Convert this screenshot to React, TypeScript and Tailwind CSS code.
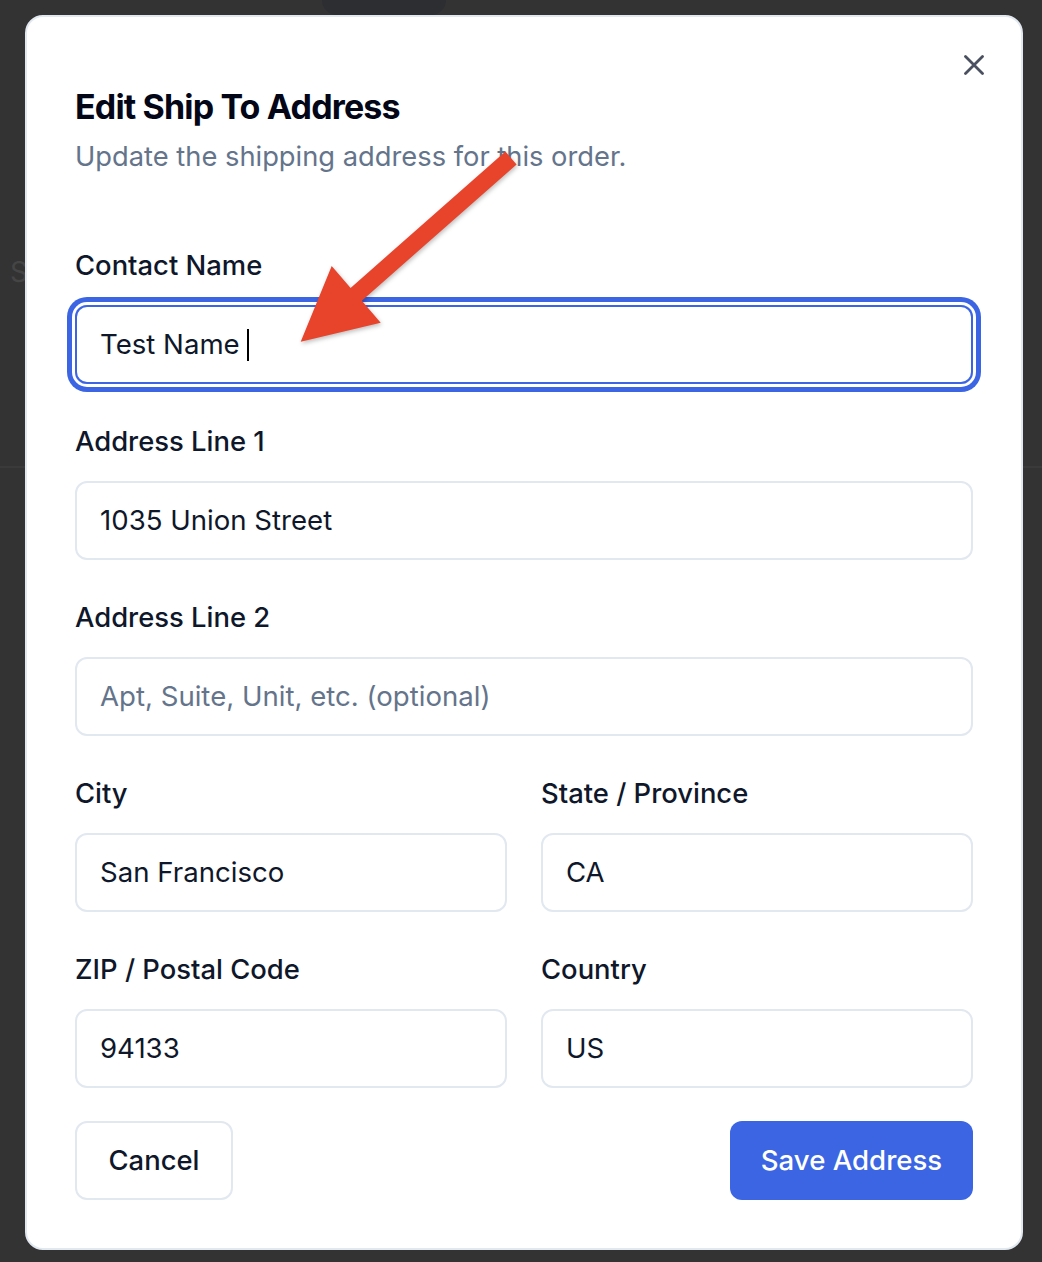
import React from "react";

const font = { fontFamily: "Inter, 'Noto Sans', sans-serif" };

function Field({ label, value, placeholder }: { label: string; value?: string; placeholder?: string }) {
  return (
    <div className="flex flex-col">
      <label className="text-[27.4px] leading-[40px] font-medium text-[#0f172a] mb-[20px] pt-[1px]">{label}</label>
      <div className="h-[79px] rounded-[12px] border-2 border-[#e2e8f0] px-[23px] flex items-center text-[27.6px]">
        {value ? (
          <span className="text-[#0f172a]">{value}</span>
        ) : (
          <span className="text-[#64748b]">{placeholder}</span>
        )}
      </div>
    </div>
  );
}

export default function App() {
  return (
    <div className="relative w-[1042px] h-[1262px] bg-[#333333] overflow-hidden" style={font}>
      {/* page behind the dialog */}
      <div className="flex flex-col">
        <div className="h-[15px] flex">
          <div className="ml-[322px] w-[124px] h-[30px] -mt-[15px] rounded-full bg-[#2d2e32]" />
        </div>
        <div className="pl-[10px] pt-[237px] text-[28px] leading-[40px] text-[#454545]">S</div>
        <div className="mt-[174px] h-[2px] bg-[#3a3a3a]" />
      </div>

      {/* dialog */}
      <div className="absolute left-[25px] top-[15px] w-[998px] bg-white border-2 border-[#e2e8f0] rounded-[18px] px-[48px] pt-[70px] pb-[48px]">
        <button className="absolute top-[38px] right-[37px] w-[20px] h-[20px] text-[#4b5060]">
          <svg width="20" height="20" viewBox="0 0 20 20" fill="none" stroke="currentColor" strokeWidth="2.8" strokeLinecap="round">
            <path d="M1.5 1.5 18.5 18.5M18.5 1.5 1.5 18.5" />
          </svg>
        </button>

        <h2 className="text-[34px] leading-[40px] font-bold tracking-[-0.025em] text-[#020617]">Edit Ship To Address</h2>
        <p className="mt-[10px] text-[27.3px] leading-[40px] text-[#64748b]">Update the shipping address for this order.</p>

        <div className="mt-[67px] flex flex-col gap-[36px]">
          <div className="flex flex-col">
            <label className="text-[27.4px] leading-[40px] font-medium text-[#0f172a] mb-[20px] pt-[1px]">Contact Name</label>
            <div className="h-[79px] rounded-[12px] border-2 border-[#3b65e3] shadow-[0_0_0_3px_#ffffff,0_0_0_8px_#3b65e3] px-[23px] flex items-center text-[27.6px] text-[#0f172a]">
              <span>Test Name</span>
              <span className="ml-[7px] w-[2px] h-[32px] bg-black" />
            </div>
          </div>
          <Field label="Address Line 1" value="1035 Union Street" />
          <Field label="Address Line 2" placeholder="Apt, Suite, Unit, etc. (optional)" />
          <div className="grid grid-cols-2 gap-x-[34px]">
            <Field label="City" value="San Francisco" />
            <Field label="State / Province" value="CA" />
          </div>
          <div className="grid grid-cols-2 gap-x-[34px]">
            <Field label="ZIP / Postal Code" value="94133" />
            <Field label="Country" value="US" />
          </div>
        </div>

        <div className="mt-[33px] flex justify-between">
          <button className="w-[158px] h-[79px] rounded-[12px] border-2 border-[#e2e8f0] bg-white text-[27.4px] font-medium text-[#0f172a] flex items-center justify-center">
            Cancel
          </button>
          <button className="w-[243px] h-[79px] rounded-[12px] bg-[#3b65e3] text-[27.6px] font-medium text-white flex items-center justify-center">
            Save Address
          </button>
        </div>
      </div>

      {/* annotation arrow */}
      <svg className="absolute left-0 top-0 pointer-events-none" width="1042" height="1262" style={{ filter: "drop-shadow(1px 2px 2px rgba(0,0,0,0.25))" }}>
        <polygon
          fill="#e8432b"
          points="505.4,151.6 350.6,287.9 331.7,266 300.7,341.7 380.7,322.7 361.8,300.7 516.6,164.4"
        />
      </svg>
    </div>
  );
}
